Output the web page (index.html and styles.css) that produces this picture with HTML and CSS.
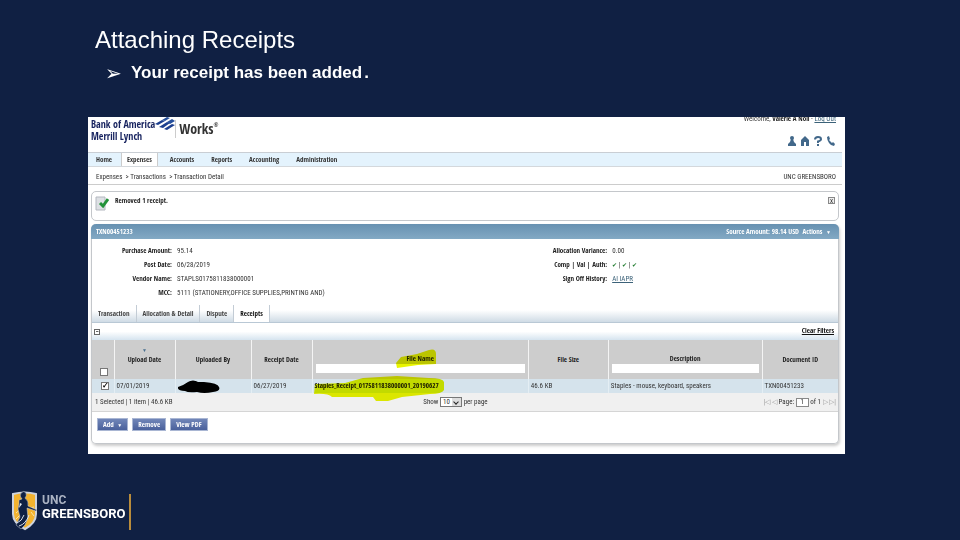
FILE: index.html
```html
<!DOCTYPE html>
<html lang="en">
<head>
    <meta charset="UTF-8">
    <meta name="viewport" content="width=device-width, initial-scale=1.0">
    <title>Attaching Receipts</title>
    <link rel="stylesheet" href="styles.css">
</head>
<body>
    <header class="slide-header">
        <h1>Attaching Receipts</h1>
        <ul class="steps">
            <li>Your receipt has been added<span class="dot">.</span></li>
        </ul>
    </header>

    <main class="works">
        <div class="masthead">
            <div class="brand">
                <div class="bank">
                    <div class="bank-line">Bank of America
                        <svg class="flag" viewBox="0 0 20 13"><path d="M0 7l7-4 3 1-7 4zM4 10l8-5 3 1-7 5zM9 12l8-5 3 1-8 5z" fill="#1c3f8f"/><path d="M7 3l5-3 3 1-5 3zM12 5l5-3 3 2-5 3z" fill="#27509c"/></svg>
                    </div>
                    <div>Merrill Lynch</div>
                </div>
                <div class="product">Works<sup>®</sup></div>
            </div>
            <div class="account">
                <div class="welcome">Welcome, <b>Valerie A Noll</b> - <a href="#">Log Out</a></div>
                <div class="tools">
                    <svg viewBox="0 0 10 10"><circle cx="5" cy="2" r="2"/><path d="M4 3h2l1 3 2 2v2H1V8l2-2z"/></svg>
                    <svg viewBox="0 0 10 10"><path d="M5 0l4 4v6H6V6H4v4H1V4z"/></svg>
                    <svg viewBox="0 0 10 10"><path d="M2 3.500Q2 1 5 1t3 2.200Q8 4.500 5 5.500V7" fill="none" stroke="#42688a" stroke-width="2"/><path d="M4 8h2v2H4z"/></svg>
                    <svg viewBox="0 0 10 10"><path d="M1 1l2-1 1 3-1 1 3 3 1-1 2 2-1 2Q5 10 3 7T1 1z"/></svg>
                </div>
            </div>
        </div>

        <nav class="menu">
            <a href="#">Home</a>
            <a href="#" class="current">Expenses</a>
            <a href="#">Accounts</a>
            <a href="#">Reports</a>
            <a href="#">Accounting</a>
            <a href="#">Administration</a>
        </nav>

        <div class="crumbs">
            <span>Expenses &nbsp;&gt; Transactions &nbsp;&gt; Transaction Detail</span>
            <span class="company">UNC GREENSBORO</span>
        </div>

        <div class="notice">
            <svg class="notice-icon" viewBox="0 0 14 15"><path d="M1 1h9v13H1z" fill="#dde0e4" stroke="#b4b8c0"/><path d="M5 7l3 3 5-7" fill="none" stroke="#23923a" stroke-width="3"/></svg>
            <b>Removed 1 receipt.</b>
            <button class="close" aria-label="Close">x</button>
        </div>

        <section class="card">
            <div class="card-title">
                <span>TXN00451233</span>
                <span>Source Amount: 98.14 USD &nbsp;Actions &nbsp;<small>▼</small></span>
            </div>

            <div class="details">
                <dl>
                    <dt>Purchase Amount:</dt><dd>95.14</dd>
                    <dt>Post Date:</dt><dd>06/28/2019</dd>
                    <dt>Vendor Name:</dt><dd>STAPLS0175811838000001</dd>
                    <dt>MCC:</dt><dd>5111 (STATIONERY,OFFICE SUPPLIES,PRINTING AND)</dd>
                </dl>
                <dl>
                    <dt>Allocation Variance:</dt><dd>0.00</dd>
                    <dt>Comp | Val | Auth:</dt><dd><i class="tick">✔</i> | <i class="tick">✔</i> | <i class="tick">✔</i></dd>
                    <dt>Sign Off History:</dt><dd><a href="#">AI IAPR</a></dd>
                </dl>
            </div>

            <div class="tabs">
                <button>Transaction</button>
                <button>Allocation &amp; Detail</button>
                <button>Dispute</button>
                <button class="current">Receipts</button>
            </div>

            <div class="filters">
                <button class="collapse" aria-label="Collapse">−</button>
                <a href="#">Clear Filters</a>
            </div>

            <table>
                <thead>
                    <tr>
                        <th class="c-check"><input type="checkbox" aria-label="Select all"></th>
                        <th class="c-upload"><span class="sort">▼</span>Upload Date</th>
                        <th class="c-by">Uploaded By</th>
                        <th class="c-date">Receipt Date</th>
                        <th class="c-file"><label for="file-name" class="marked">File Name<svg class="marker-head" viewBox="0 0 40 19" preserveAspectRatio="none"><path d="M0 14L5 8l16-3L33 1q7-2 7 4v10l-18 1-21 3z"/></svg></label><input type="text" id="file-name"></th>
                        <th class="c-size">File Size</th>
                        <th class="c-desc"><label for="description">Description</label><input type="text" id="description"></th>
                        <th class="c-doc">Document ID</th>
                    </tr>
                </thead>
                <tbody>
                    <tr>
                        <td class="c-check"><input type="checkbox" aria-label="Select receipt" checked></td>
                        <td>07/01/2019</td>
                        <td><svg class="redacted" viewBox="0 0 42 13"><path d="M0 7q6-2 10-5 5-3 10 0l6 0q14 1 15 5 2 4-6 5-9 2-16 0-9 1-12-1-8 0-7-4z"/></svg></td>
                        <td>06/27/2019</td>
                        <td><span class="marked"><b>Staples_Receipt_0175811838000001_20190627</b><svg class="marker-row" viewBox="0 0 132 26" preserveAspectRatio="none"><path d="M2 8l30-1 18-5 34-2 32 2q14 0 15 4v8q-2 4-14 4l-28 3-14 4H63l-3-4-41 0q-4-4-18-3z"/></svg></span></td>
                        <td>46.6 KB</td>
                        <td>Staples - mouse, keyboard, speakers</td>
                        <td>TXN00451233</td>
                    </tr>
                </tbody>
            </table>

            <div class="pager">
                <span>1 Selected | 1 item | 46.6 KB</span>
                <label class="per-page">Show <span class="picker"><select><option>10</option></select></span> per page</label>
                <span class="pages"><i>|◁ ◁</i> <label>Page: <input type="text" value="1"></label> of 1 <i>▷ ▷|</i></span>
            </div>

            <div class="actions">
                <button>Add &nbsp;<small>▼</small></button>
                <button>Remove</button>
                <button>View PDF</button>
            </div>
        </section>
    </main>

    <footer class="logo">
        <svg class="shield" viewBox="0 0 28 42">
            <path d="M2 4q12-3 23 0v20q0 9-11 15Q2 33 2 24z" fill="#f3b32f" stroke="#cdd3de" stroke-width="2"/>
            <path d="M5 23l7-6M5 29l8-8M20 22l3 4M19 18l4-1" stroke="#fbe3a3"/>
            <path d="M8 10l3-1q-3-3-1-6 3-3 5 0 1 3-1 5 4 3 3 8l9 4-1 1-9-3 1 10-3 7-4 4-5-4 4-8-2-8 1-5z" fill="#0f2044" stroke="#cdd3de" stroke-width=".5"/>
            <path d="M9 13l2 1-3 4z" fill="#e9edf2"/>
            <path d="M8 36q7-2 10-11M6 33q5-2 7-8" fill="none" stroke="#dce2ea"/>
        </svg>
        <div class="wordmark">
            <div class="unc">UNC</div>
            <div>GREENSBORO</div>
        </div>
    </footer>
</body>
</html>
```
FILE: styles.css
```css
* {
    box-sizing: border-box;
}
body {
    font-family: "Liberation Sans", Arial, sans-serif;
    margin: 0;
    min-height: 100vh;
    display: flex;
    flex-direction: column;
    background-color: #102043;
    color: #fff;
}
.slide-header {
    height: 117px;
    padding: 26px 95px 0;
}
h1 {
    font-size: 24px;
    line-height: 28px;
    font-weight: normal;
    margin: 0;
}
.steps {
    list-style: none;
    margin: 8px 0 0;
    padding: 0 0 0 10px;
    font-size: 17px;
    line-height: 22px;
    font-weight: bold;
}
.steps li {
    display: flex;
}
.steps li::before {
    content: "➢";
    width: 26px;
    font-family: "DejaVu Sans", sans-serif;
    font-size: 20px;
    font-weight: normal;
}
.dot {
    padding-left: 2px;
}

/* Works application window */
.works {
    margin: 0 115px 0 88px;
    padding: 0 3px 10px 0;
    background-color: #fff;
    color: #333;
    font-family: "Roboto Condensed", Roboto, sans-serif;
    font-size: 7px;
    line-height: 10px;
}
.works b,
.bank,
.product,
.menu,
.card-title,
dt,
.tabs,
.filters,
th,
.actions {
    font-family: "Open Sans Condensed", "Roboto Condensed", sans-serif;
    color: #222;
}
.works a {
    color: #3c6279;
}
.works button,
.works input,
.works select {
    font: inherit;
    color: inherit;
    margin: 0;
    padding: 0;
    border: 0;
    border-radius: 0;
}
.works small {
    font-size: 5px;
}
.masthead {
    display: flex;
    justify-content: space-between;
    height: 35px;
    overflow: hidden;
}
.brand {
    display: flex;
    align-items: flex-start;
    padding-left: 3px;
}
.bank {
    padding-top: 1px;
    color: #17235f;
    font-size: 10px;
    line-height: 12px;
    font-weight: bold;
}
.bank-line {
    display: flex;
}
.flag {
    width: 20px;
    height: 13px;
    margin-top: -1px;
}
.product {
    border-left: 1px solid #ccc;
    margin: 3px 0 0;
    padding-left: 3px;
    color: #333;
    font-size: 14px;
    line-height: 18px;
    font-weight: bold;
}
.product sup {
    font-size: 6px;
    vertical-align: top;
    line-height: 10px;
}
.account {
    margin-top: -3px;
    padding-right: 6px;
    text-align: right;
}
.tools {
    display: flex;
    justify-content: flex-end;
    gap: 3px;
    margin-top: 12px;
}
.tools svg {
    width: 10px;
    height: 10px;
    fill: #42688a;
}
.menu {
    display: flex;
    height: 15px;
    gap: 4px;
    border-top: 1px solid #c9ced4;
    border-bottom: 1px solid #d4d8dc;
    background-color: #e4f3fd;
}
.works .menu a {
    padding: 2px 5px 0 8px;
    color: #333;
    font-weight: bold;
    text-decoration: none;
}
.works .menu .current {
    padding: 2px 5px 0;
    background-color: #fff;
    border-left: 1px solid #ccc;
    border-right: 1px solid #ccc;
}
.crumbs {
    display: flex;
    justify-content: space-between;
    height: 18px;
    padding: 5px 6px 0 8px;
    border-bottom: 1px solid #ccc;
}
.notice {
    display: flex;
    height: 30px;
    margin: 6px 3px 3px;
    padding: 4px 3px;
    border: 1px solid #c4c7cb;
    border-radius: 5px;
}
.notice-icon {
    width: 14px;
    height: 15px;
    margin-right: 6px;
}
.works .close {
    width: 7px;
    height: 7px;
    margin: 1px 0 0 auto;
    border: 1px solid #888;
    background-color: #eee;
    line-height: 4px;
}
.card {
    margin: 0 3px;
    border: 1px solid #c4c7cb;
    border-top: 0;
    border-radius: 5px;
    box-shadow: 1px 2px 3px #ccc;
}
.card-title {
    display: flex;
    justify-content: space-between;
    height: 15px;
    margin: 0 -1px;
    padding: 3px 8px 0 5px;
    border-radius: 5px 5px 0 0;
    background: linear-gradient(#6791b1, #83a9c4);
    color: #fff;
    font-weight: bold;
}
.details {
    display: grid;
    grid-template-columns: 7fr 5fr;
    height: 66px;
    padding-top: 5px;
}
.details dl {
    display: grid;
    grid-template-columns: 80px 1fr;
    grid-auto-rows: 14px;
    column-gap: 5px;
    margin: 0;
    line-height: 14px;
}
.details dt {
    font-weight: bold;
    text-align: right;
}
.details dd {
    margin: 0;
}
.tick {
    color: #1d7a2b;
    font-style: normal;
    font-size: 6px;
}
.tabs {
    display: flex;
    height: 18px;
    background: linear-gradient(#fff 30%, #cfdbe5);
    border-bottom: 1px solid #b9c8d5;
}
.works .tabs button {
    padding: 0 6px;
    border-right: 1px solid #c3ccd5;
    background: none;
    color: #444;
    font-weight: bold;
}
.works .tabs .current {
    background-color: #fff;
    color: #111;
}
.filters {
    display: flex;
    justify-content: space-between;
    height: 17px;
    padding: 3px 4px 0 2px;
    background: linear-gradient(#fff 50%, #d6e4ef);
    font-weight: bold;
}
.works .filters a {
    color: #111;
}
.works .collapse {
    width: 6px;
    height: 6px;
    margin-top: 3px;
    border: 1px solid #666;
    background-color: #fff;
    line-height: 4px;
}
table {
    width: 100%;
    table-layout: fixed;
    border-collapse: collapse;
}
th {
    height: 39px;
    padding: 0 3px;
    border-right: 1px solid #f4f4f4;
    background-color: #cdcdcd;
    position: relative;
}
td {
    height: 14px;
    padding: 0 2px;
    border-right: 1px solid #e4eef4;
    background-color: #d5e3ec;
    white-space: nowrap;
}
th:last-child,
td:last-child {
    border-right: 0;
}
.c-check {
    width: 22px;
    text-align: right;
    vertical-align: bottom;
}
.c-upload,
.c-date {
    width: 61px;
}
.c-by {
    width: 76px;
}
.c-file {
    width: 29%;
}
.c-size {
    width: 80px;
}
.c-doc {
    width: 76px;
}
.sort {
    position: absolute;
    top: 5px;
    left: 0;
    width: 100%;
    color: #4a7190;
    font-size: 5px;
}
th label {
    display: inline-block;
    margin-top: 8px;
}
.works th input[type="text"] {
    display: block;
    width: 100%;
    height: 9px;
    background-color: #fff;
}
.works input[type="checkbox"] {
    appearance: none;
    width: 8px;
    height: 8px;
    margin: 3px;
    border: 1px solid #777;
    background-color: #fff;
    display: inline-block;
    vertical-align: bottom;
}
.works input[type="checkbox"]:checked::before {
    content: "✓";
    display: block;
    color: #000;
    font-size: 8px;
    line-height: 6px;
    font-weight: bold;
}
.redacted {
    display: block;
    width: 42px;
    height: 13px;
}
.marked {
    position: relative;
}
.marked svg {
    position: absolute;
    fill: #e9f500;
    mix-blend-mode: multiply;
}
.marker-head {
    top: -5px;
    left: -10px;
    width: 40px;
    height: 19px;
}
.marker-row {
    top: -6px;
    left: -2px;
    width: 132px;
    height: 26px;
}
.pager {
    display: grid;
    grid-template-columns: 1fr auto 1fr;
    height: 19px;
    padding: 4px 2px 0 3px;
    border-bottom: 1px solid #d5d5d5;
    background-color: #f0f0f0;
}
.per-page {
    margin-right: 20px;
}
.picker {
    position: relative;
}
.picker::after {
    content: "";
    position: absolute;
    right: 4px;
    top: 2px;
    width: 3px;
    height: 3px;
    border: solid #222;
    border-width: 0 1px 1px 0;
    transform: rotate(45deg);
}
.works .pager select {
    appearance: none;
    width: 22px;
    height: 10px;
    padding-left: 2px;
    border: 1px solid #777;
    background: linear-gradient(90deg, #fff 55%, #ddd 55%);
    line-height: 8px;
}
.pages {
    text-align: right;
}
.pages i {
    color: #999;
    font-style: normal;
}
.works .pages input {
    width: 13px;
    height: 9px;
    border: 1px solid #888;
    background-color: #fff;
    text-align: center;
}
.actions {
    display: flex;
    gap: 4px;
    padding: 6px 5px 12px;
}
.works .actions button {
    height: 13px;
    padding: 0 5px;
    border: 1px solid #a9b6d3;
    background: linear-gradient(#7186b8, #4a619c);
    color: #fff;
    font-weight: bold;
}

/* university logo */
.logo {
    display: flex;
    align-items: flex-start;
    margin-top: 36px;
    padding-left: 11px;
}
.shield {
    width: 28px;
    height: 42px;
}
.wordmark {
    height: 36px;
    margin-top: 4px;
    padding: 0 3px;
    border-right: 2px solid #b98c3c;
    font-family: Roboto, sans-serif;
    font-size: 13px;
    line-height: 13px;
    font-weight: bold;
}
.unc {
    color: #aab2c2;
    font-size: 12px;
}
```
